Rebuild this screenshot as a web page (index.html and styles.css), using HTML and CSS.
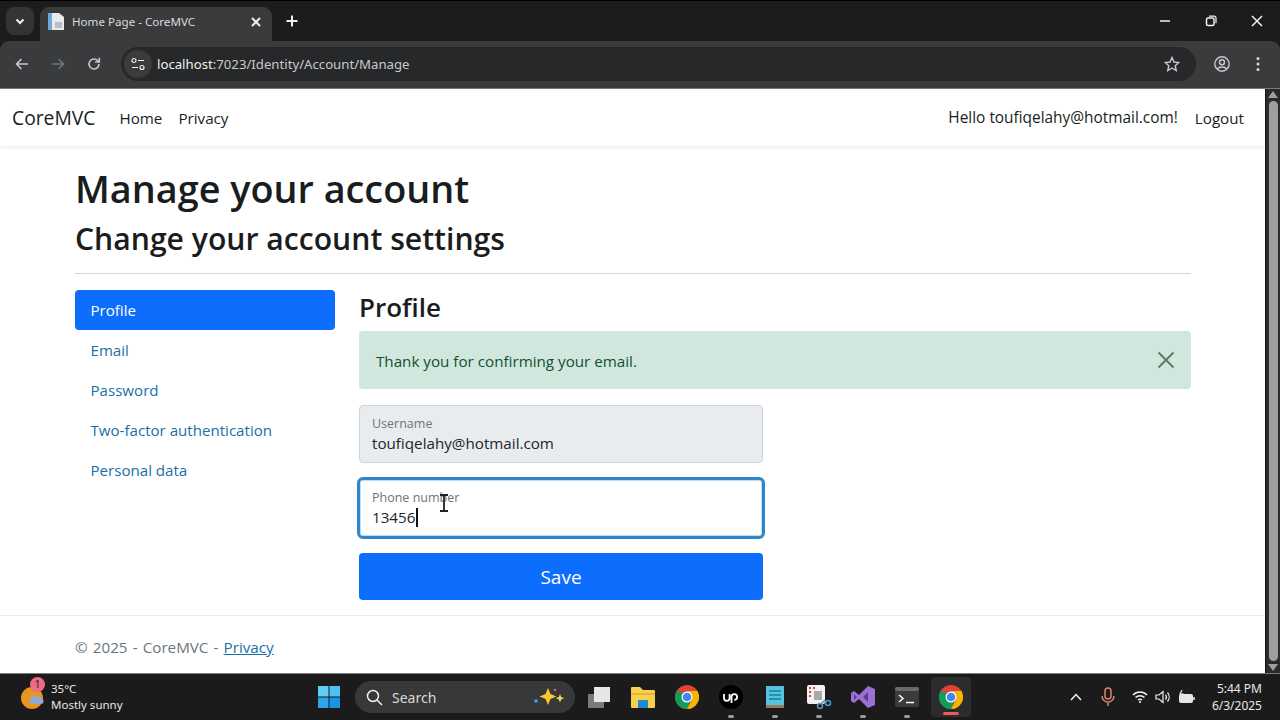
FILE: index.html
```html
<!DOCTYPE html>
<html lang="en">
<head>
<meta charset="utf-8">
<title>Home Page - CoreMVC</title>
<link rel="stylesheet" href="styles.css">
</head>
<body>
<div class="window">
  <header class="tabstrip">
    <button class="tab-search"><svg width="12" height="12" viewBox="0 0 12 12"><path d="M2.5 4.5 6 8l3.5-3.5" class="st-w2"/></svg></button>
    <div class="tab">
      <svg class="favicon" width="16" height="17" viewBox="0 0 16 17"><path d="M0 0h11l5 4v13H0z" fill="#e8eaed"/><path d="M0 0h4v17H0z" fill="#6fa8d6"/><path d="M7 9h7v6H7z" fill="#b9bdc2"/></svg>
      <span class="tab-title">Home Page - CoreMVC</span>
      <svg class="tab-close" width="10" height="10" viewBox="0 0 10 10"><path d="M1 1l8 8M9 1l-8 8" class="st-w2"/></svg>
    </div>
    <svg class="new-tab" width="12" height="12" viewBox="0 0 12 12"><path d="M6 .5v11M.5 6h11" class="st-w2"/></svg>
    <div class="win-controls">
      <svg width="12" height="12" viewBox="0 0 12 12"><path d="M1 6h10" class="st-w15"/></svg>
      <svg width="12" height="12" viewBox="0 0 12 12"><rect x="1.5" y="3" width="7.5" height="7.5" rx="1.5" class="st-w15"/><path d="M4 1.2h5a2 2 0 0 1 2 2v5" class="st-w1"/></svg>
      <svg width="12" height="12" viewBox="0 0 12 12"><path d="M1 1l10 10M11 1 1 11" class="st-w15"/></svg>
    </div>
  </header>

  <div class="toolbar">
    <svg class="tool" width="16" height="16" viewBox="0 0 16 16"><path d="M14 8H2.5M7.5 3l-5 5 5 5" class="st-g"/></svg>
    <svg class="tool" width="16" height="16" viewBox="0 0 16 16"><path d="M2 8h11.5M8.5 3l5 5-5 5" class="st-dim"/></svg>
    <svg class="tool" width="16" height="16" viewBox="0 0 16 16"><path d="M13 8a5 5 0 1 1-1.6-3.7L13 5.8" class="st-g"/><path d="M13.3 1.8v4.2H9.1" class="st-g"/></svg>
    <div class="omnibox">
      <span class="site-info"><svg width="16" height="14" viewBox="0 0 16 14"><circle cx="4" cy="3.5" r="2" class="st-w1"/><path d="M8 3.5h6M2 10.5h6" class="st-w1"/><circle cx="12" cy="10.5" r="2" class="st-w1"/></svg></span>
      <span class="url"><b>localhost</b>:7023/Identity/Account/Manage</span>
      <svg class="star" width="16" height="16" viewBox="0 0 16 16"><path d="M8 1.5 10 6l4.8.5-3.6 3.2 1 4.8L8 12l-4.200 2.500 1-4.800L1.200 6.500 6 6z" class="st-g1"/></svg>
    </div>
    <svg class="profile" width="16" height="16" viewBox="0 0 16 16"><circle cx="8" cy="8" r="7.200" class="st-g1"/><circle cx="8" cy="6.300" r="2.500" class="st-g1"/><path d="M3.500 12.800c1.500-2.500 7.500-2.500 9 0" class="st-g1"/></svg>
    <svg class="menu" width="4" height="16" viewBox="0 0 4 16"><circle cx="2" cy="2.500" r="1.500" fill="#d5d7da"/><circle cx="2" cy="8" r="1.500" fill="#d5d7da"/><circle cx="2" cy="13.500" r="1.500" fill="#d5d7da"/></svg>
  </div>

  <div class="viewport">
    <main class="page">
      <nav class="navbar">
        <a class="brand">CoreMVC</a>
        <a class="nav-link">Home</a>
        <a class="nav-link">Privacy</a>
        <span class="spacer"></span>
        <a class="nav-link hello">Hello toufiqelahy@hotmail.com!</a>
        <a class="nav-link">Logout</a>
      </nav>
      <div class="container">
        <h1>Manage your account</h1>
        <h2>Change your account settings</h2>
        <hr class="rule">
        <div class="columns">
          <ul class="pills">
            <li class="pill active">Profile</li>
            <li class="pill">Email</li>
            <li class="pill">Password</li>
            <li class="pill">Two-factor authentication</li>
            <li class="pill">Personal data</li>
          </ul>
          <section class="content">
            <h3>Profile</h3>
            <div class="alert">
              <span>Thank you for confirming your email.</span>
              <svg width="18" height="18" viewBox="0 0 18 18"><path d="M1.500 1.500l15 15M16.500 1.500l-15 15" class="st-alert"/></svg>
            </div>
            <form class="form">
              <div class="field disabled">
                <label>Username</label>
                <div class="value">toufiqelahy@hotmail.com</div>
              </div>
              <div class="field focused">
                <label>Phone number</label>
                <div class="value">13456<i class="caret"></i></div>
                <svg class="ibeam" width="10" height="18" viewBox="0 0 10 18"><path d="M1 1h8M1 17h8M5 1v16" class="st-beam"/></svg>
              </div>
              <button type="button" class="save">Save</button>
            </form>
          </section>
        </div>
      </div>
      <footer class="footer">© 2025 - CoreMVC - <a>Privacy</a></footer>
    </main>
    <div class="scrollbar">
      <svg width="10" height="7" viewBox="0 0 10 7"><path d="M5 0l5 7H0z" fill="#a0a0a0"/></svg>
      <div class="thumb"></div>
      <svg width="10" height="7" viewBox="0 0 10 7"><path d="M5 7 0 0h10z" fill="#a0a0a0"/></svg>
    </div>
  </div>

  <footer class="taskbar">
    <div class="weather">
      <div class="weather-icon">
        <svg width="26" height="26" viewBox="0 0 26 26"><circle cx="12" cy="14" r="11" fill="#e8951f"/><path d="M11 20a4 4 0 0 1 1-7 5 5 0 0 1 8 1 3 3 0 0 1 1 6z" fill="#8fa9cf"/></svg>
        <span class="badge">1</span>
      </div>
      <div class="weather-text"><span>35°C</span><span>Mostly sunny</span></div>
    </div>
    <div class="task-center">
      <svg class="winlogo" width="24" height="24" viewBox="0 0 24 24"><path d="M1 1h10.500v10.500H1z" fill="#5fd0f5"/><path d="M12.500 1H23v10.500H12.500z" fill="#4cc2f1"/><path d="M1 12.500h10.500V23H1z" fill="#2ba6ea"/><path d="M12.500 12.500H23V23H12.500z" fill="#1b93e2"/></svg>
      <div class="search">
        <svg width="17" height="17" viewBox="0 0 17 17"><circle cx="7" cy="7" r="5.500" class="st-w15"/><path d="M11 11l5 5" class="st-w15"/></svg>
        <span>Search</span>
        <svg class="spark" width="36" height="22" viewBox="0 0 36 22"><path d="M17 2l2.500 6 6 2.500-6 2.500-2.500 6-2.500-6-6-2.500 6-2.500z" fill="#f7c531"/><path d="M29 8l1.200 3 3 1.200-3 1.200-1.200 3-1.200-3-3-1.200 3-1.200z" fill="#f4d35e"/><circle cx="5" cy="15" r="1.800" fill="#3ba9d9"/><circle cx="24" cy="4" r="1.300" fill="#e2604f"/></svg>
      </div>
      <div class="app"><svg width="26" height="24" viewBox="0 0 26 24"><path d="M2 9h16v14H2z" fill="#7b7b7b"/><path d="M8 2h16v15H8z" fill="#e6e6e6"/></svg></div>
      <div class="app"><svg width="26" height="24" viewBox="0 0 26 24"><path d="M1 3a1 1 0 0 1 1-1h8l3 3h11a1 1 0 0 1 1 1v16a1 1 0 0 1-1 1H2a1 1 0 0 1-1-1z" fill="#f7d04d"/><path d="M1 8h24v2H1z" fill="#e8b62f"/><path d="M9 15h8a1 1 0 0 1 1 1v7H8v-7a1 1 0 0 1 1-1z" fill="#1e88d0"/></svg></div>
      <div class="app">
        <svg width="24" height="24" viewBox="0 0 24 24"><circle cx="12" cy="12" r="12" fill="#db4437"/><path d="M1.600 6A12 12 0 0 0 12 24l5-12z" fill="#0f9d58"/><path d="M22.400 6H12l5 9-5 9A12 12 0 0 0 22.400 6z" fill="#f4b400"/><circle cx="12" cy="12" r="5.500" fill="#fff"/><circle cx="12" cy="12" r="4.300" fill="#4285f4"/></svg>
      </div>
      <div class="app dot">
        <svg width="24" height="24" viewBox="0 0 24 24"><circle cx="12" cy="12" r="12" fill="#000"/><path d="M5 9v4a2.800 2.800 0 0 0 5.600 0V9M12.500 18V12a2.800 2.800 0 1 1 2.800 2.800" fill="none" stroke="#fff" stroke-width="1.800"/></svg>
      </div>
      <div class="app dot">
        <svg width="20" height="24" viewBox="0 0 20 24"><path d="M1 1h18v21H1z" fill="#54c3e0"/><path d="M1 20h18v3H1z" fill="#9a7a56"/><path d="M4 6h12M4 10h12M4 14h12" stroke="#1f7d9c" stroke-width="1.500"/></svg>
      </div>
      <div class="app dot">
        <svg width="26" height="26" viewBox="0 0 26 26"><rect x="1" y="1" width="18" height="19" rx="2" fill="#f2f2f2"/><path d="M3 3h2v2H3zM3 7h2v2H3zM3 11h2v2H3zM7 3h2v2H7z" fill="#d1452f"/><path d="M8 7h8v9H8z" fill="#a9a9a9"/><circle cx="14" cy="22" r="2.500" fill="none" stroke="#5f90b8" stroke-width="1.500"/><circle cx="22" cy="19" r="2.500" fill="none" stroke="#3aa0d6" stroke-width="1.500"/><path d="M15 20l4-4" stroke="#5f90b8" stroke-width="1.500"/></svg>
      </div>
      <div class="app dot">
        <svg width="26" height="24" viewBox="0 0 26 24"><path d="M1 8l3-2 5 4 9-9 7 3v16l-7 3-9-9-5 4-3-2z" fill="#9b72d4"/><path d="M4 9v6l3-3zM18 7l-5 5 5 5z" fill="#5e3aa0"/></svg>
      </div>
      <div class="app dot">
        <svg width="24" height="20" viewBox="0 0 24 20"><rect width="24" height="20" rx="2" fill="#3b3b3b"/><rect width="24" height="4" rx="2" fill="#6a6a6a"/><path d="M4 8l4 3.500-4 3.500" fill="none" stroke="#fff" stroke-width="1.500"/><path d="M11 15.500h8" stroke="#fff" stroke-width="1.500"/></svg>
      </div>
      <div class="app current">
        <svg width="24" height="24" viewBox="0 0 24 24"><circle cx="12" cy="12" r="12" fill="#db4437"/><path d="M1.600 6A12 12 0 0 0 12 24l5-12z" fill="#0f9d58"/><path d="M22.400 6H12l5 9-5 9A12 12 0 0 0 22.400 6z" fill="#f4b400"/><circle cx="12" cy="12" r="5.500" fill="#fff"/><circle cx="12" cy="12" r="4.300" fill="#4285f4"/></svg>
      </div>
    </div>
    <div class="tray">
      <svg class="tray-up" width="12" height="8" viewBox="0 0 12 8"><path d="M1 7l5-5.500L11 7" class="st-w15"/></svg>
      <svg class="tray-mic" width="14" height="20" viewBox="0 0 14 20"><rect x="4" y="1" width="6" height="11" rx="3" fill="none" stroke="#d98266" stroke-width="1.500"/><path d="M1 9a6 6 0 0 0 12 0M7 15v4" fill="none" stroke="#d98266" stroke-width="1.500"/></svg>
      <svg class="tray-wifi" width="16" height="14" viewBox="0 0 16 14"><path d="M1 5c4-4 10-4 14 0M3.500 7.500c2.500-2.500 6.500-2.500 9 0M6 10c1-1 3-1 4 0" class="st-w15"/><circle cx="8" cy="12" r="1" fill="#fff"/></svg>
      <svg class="tray-vol" width="16" height="14" viewBox="0 0 16 14"><path d="M1 5v4h3l4 3.500v-11L4 5z" class="st-w1"/><path d="M10.500 4.500a4 4 0 0 1 0 5M12.500 2.500a7 7 0 0 1 0 9" class="st-w1"/></svg>
      <svg class="tray-bat" width="18" height="14" viewBox="0 0 18 14"><rect x="1" y="4" width="14" height="9" rx="2" fill="#e6e6e6"/><path d="M16 7v3" class="st-w15"/><path d="M4 0 2 4h3L3 7" stroke="#e6e6e6" stroke-width="1.200" fill="none"/></svg>
      <div class="clock"><span>5:44 PM</span><span>6/3/2025</span></div>
    </div>
  </footer>
</div>
</body>
</html>
```
FILE: styles.css
```css
* { box-sizing: border-box; }
html, body { margin: 0; height: 100%; overflow: hidden; }
body { font-family: "Open Sans", "Noto Sans", sans-serif; color: #212529; }
svg { display: block; flex: none; }
.st-w2, .st-w15, .st-w1 { fill: none; stroke: #f0f0f0; }
.st-w2 { stroke-width: 2; }
.st-w15 { stroke-width: 1.5; }
.st-w1 { stroke-width: 1.2; }
.st-g { fill: none; stroke: #c7c9cc; stroke-width: 1.6; }
.st-g1 { fill: none; stroke: #c7c9cc; stroke-width: 1.4; }
.st-dim { fill: none; stroke: #70747a; stroke-width: 1.6; }
.st-alert { fill: none; stroke: #5f7a6c; stroke-width: 2; }
.st-beam { fill: none; stroke: #222; stroke-width: 1.8; }

.window { height: 720px; display: flex; flex-direction: column; background: #1c1c1c; }

.tabstrip { height: 41px; display: flex; align-items: flex-end; background: #1c1c1c; padding: 0 0 0 6px; border-top: 1px solid #000; flex: none; }
.tab-search { width: 28px; height: 28px; margin-bottom: 6px; border: 0; border-radius: 8px; background: #333436; display: flex; align-items: center; justify-content: center; padding: 0; }
.tab { width: 232px; height: 34px; margin-left: 6px; background: #3a3b3d; border-radius: 9px 9px 0 0; display: flex; align-items: center; padding: 0 11px 5px 8px; }
.tab-title { margin-left: 8px; flex: 1; font-size: 11.6px; color: #d9dadc; white-space: nowrap; font-family: "Noto Sans", sans-serif; }
.new-tab { margin: 0 0 14px 14px; }
.win-controls { margin-left: auto; display: flex; gap: 34px; padding-right: 17px; margin-bottom: 14px; align-items: center; }

.toolbar { height: 47px; display: flex; align-items: center; background: #3a3b3d; border-radius: 9px 9px 0 0; padding: 0 14px 2px 14px; flex: none; }
.tool { margin-right: 20px; }
.tool:nth-child(3) { margin-right: 19px; }
.omnibox { width: 1075px; height: 34px; background: #27282a; border-radius: 17px; display: flex; align-items: center; padding: 0 16px 0 3px; }
.site-info { width: 28px; height: 28px; border-radius: 50%; background: #3a3b3d; display: flex; align-items: center; justify-content: center; }
.url { margin-left: 5px; flex: 1; font-size: 13.2px; color: #c9cacc; white-space: nowrap; font-family: "Noto Sans", sans-serif; }
.url b { font-weight: 400; color: #f1f1f1; }
.profile { margin-left: 18px; }
.menu { margin-left: 26px; }

.viewport { flex: 1; min-height: 0; display: flex; background: #fff; border-top: 1px solid #7a7a7a; border-bottom: 1px solid #7a7a7a; }
.page { flex: 1; min-width: 0; display: flex; flex-direction: column; background: #fff; }

.navbar { height: 57px; display: flex; align-items: center; padding: 0 21px 0 12px; box-shadow: 0 1px 4px rgba(0,0,0,.1); flex: none; }
.brand { font-size: 19.3px; margin-right: 24px; color: #1a1d20; }
.nav-link { font-size: 15.2px; color: #1a1d20; margin-right: 16px; white-space: nowrap; }
.nav-link.hello { font-size: 15.4px; margin-right: 17px; }
.nav-link:last-child { margin-right: 0; }
.spacer { flex: 1; }

.container { padding: 0 74px 0 75px; }
h1 { font-size: 37.8px; font-weight: 600; line-height: 46px; margin: 20px 0 0; color: #1a1d20; }
h2 { font-size: 30.15px; font-weight: 600; line-height: 36px; margin: 9px 0 0; color: #1a1d20; }
.rule { border: 0; border-top: 1px solid #d4d5d6; margin: 16px 0 16px; }
.columns { display: flex; gap: 24px; }
.pills { list-style: none; margin: 0; padding: 0; width: 260px; flex: none; }
.pill { height: 40px; line-height: 41px; padding: 0 15.5px; font-size: 15.1px; color: #1a6fa8; border-radius: 4px; white-space: nowrap; }
.pill.active { background: #0d6efd; color: #fff; }

.content { flex: 1; min-width: 0; }
h3 { font-size: 26px; font-weight: 600; line-height: 34px; margin: 0 0 7px; color: #1a1d20; }
.alert { height: 58px; background: #d1e7dd; color: #0f5132; border-radius: 4px; display: flex; align-items: center; justify-content: space-between; padding: 1px 16px 0 17px; font-size: 15.2px; margin-bottom: 16px; }
.alert svg { margin-top: -1px; }
.form { width: 404px; display: flex; flex-direction: column; }
.field { position: relative; height: 58px; border: 1px solid #ced4da; border-radius: 4px; padding: 10px 12px 0; margin-bottom: 14px; }
.field label { display: block; font-size: 12.5px; line-height: 15px; color: #6c757d; }
.value { font-size: 15.2px; line-height: 24px; color: #212529; display: flex; align-items: center; white-space: nowrap; }
.disabled { background: #e9ecef; }
.focused { height: 62px; margin: 0 -2px 14px; border: 3px solid #2f86c8; box-shadow: inset 0 0 0 1px #bcdcf3; padding: 10px 12px 0; border-radius: 6px; }
.caret { width: 1.5px; height: 19px; background: #111; margin-left: 1px; }
.ibeam { position: absolute; left: 79px; top: 14px; }
.save { height: 47px; background: #0d6efd; color: #fff; border: 0; border-radius: 4px; font: inherit; font-size: 19px; padding: 0; }

.footer { margin-top: auto; height: 58px; border-top: 1px solid #e9eaeb; padding: 21px 75px 0; font-size: 15.2px; word-spacing: 1.2px; color: #6c757d; }
.footer a { color: #1a6fa8; text-decoration: underline; word-spacing: 0; }

.scrollbar { width: 15px; background: #2b2b2b; border-left: 1px solid #111; display: flex; flex-direction: column; align-items: center; padding: 2px 0; flex: none; }
.thumb { width: 9px; flex: 1; margin: 3px 0; border-radius: 5px; background: #9e9e9e; }

.taskbar { height: 46px; flex: none; display: flex; align-items: center; background: #1b1b1c; position: relative; }
.weather { width: 321px; display: flex; align-items: center; padding-left: 20px; gap: 5px; }
.weather-icon { position: relative; width: 26px; height: 26px; }
.badge { position: absolute; left: 10px; top: -7px; width: 15px; height: 15px; border-radius: 50%; background: #ef6a86; color: #111; font-size: 10.5px; line-height: 15px; text-align: center; }
.weather-text { display: flex; flex-direction: column; font-size: 11.5px; line-height: 16px; color: #e8e8e8; font-family: "Noto Sans", sans-serif; }
.task-center { display: flex; align-items: center; height: 100%; }
.winlogo { margin-right: 14px; margin-left: -4px; }
.search { width: 220px; height: 32px; margin-right: 2px; border-radius: 16px; background: #37383a; display: flex; align-items: center; padding: 0 8px 0 11px; gap: 9px; color: #d8d8d8; font-size: 14px; font-family: "Noto Sans", sans-serif; }
.spark { margin-left: auto; }
.app { position: relative; width: 44px; height: 100%; display: flex; align-items: center; justify-content: center; }
.dot::after, .current::after { content: ""; position: absolute; bottom: 2px; left: 50%; transform: translateX(-50%); width: 6px; height: 3px; border-radius: 2px; background: #9a9a9a; }
.current { width: 40px; height: 40px; margin-left: 2px; background: #2b2c2d; border-radius: 4px; }
.current::after { width: 16px; background: #e0605a; }
.tray { margin-left: auto; display: flex; align-items: center; padding-right: 18px; }
.tray-up { margin-right: 19px; }
.tray-mic { margin-right: 17px; }
.tray-wifi { margin-right: 7px; }
.tray-vol { margin-right: 7px; }
.tray-bat { margin-right: 16px; }
.clock { display: flex; flex-direction: column; align-items: flex-end; font-size: 12px; line-height: 17px; color: #e8e8e8; font-family: "Noto Sans", sans-serif; }
```
